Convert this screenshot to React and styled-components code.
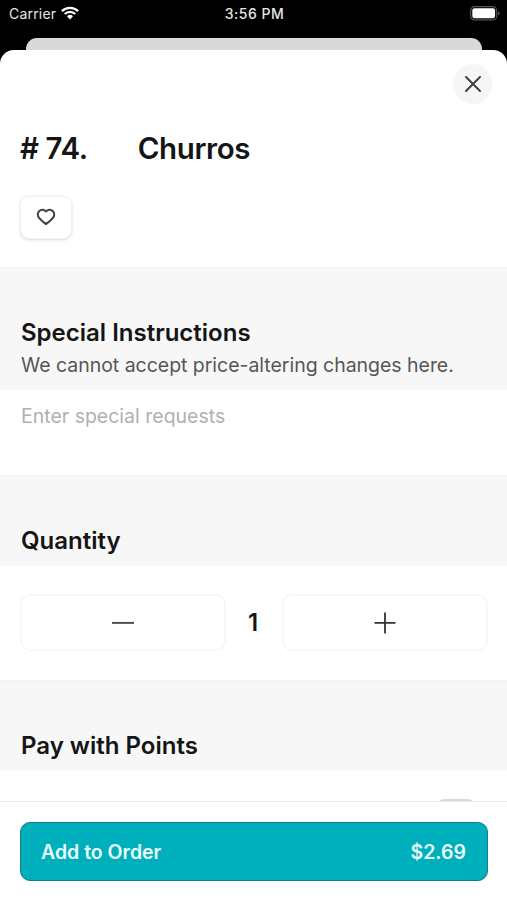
import React, { useState } from 'react';
import styled, { createGlobalStyle } from 'styled-components';

const GlobalStyle = createGlobalStyle`
  * {
    box-sizing: border-box;
  }

  body {
    margin: 0;
    background-color: #000;
    font-family: Inter, 'Liberation Sans', sans-serif;
    color: #151515;
  }

  button {
    font-family: inherit;
    color: inherit;
    padding: 0;
  }
`;

const Screen = styled.div`
  display: flex;
  flex-direction: column;
  height: 900px;
  overflow: hidden;
`;

const StatusBar = styled.header`
  display: grid;
  grid-template-columns: 1fr auto 1fr;
  align-items: center;
  height: 26px;
  margin-bottom: 12px;
  padding: 0 7px 0 9px;
  color: #e6e6e6;
  font-size: 14px;
`;

const Carrier = styled.div`
  display: flex;
  align-items: center;
  gap: 5px;
  letter-spacing: 0.2px;
`;

const Clock = styled.div`
  font-weight: 500;
  letter-spacing: 0.5px;
`;

const BatterySlot = styled.div`
  display: flex;
  justify-content: flex-end;
`;

const PreviousSheet = styled.div`
  flex: none;
  height: 12px;
  margin: 0 25px 0 26px;
  border-radius: 11px 11px 0 0;
  background-color: #d9d9d9;
`;

const Sheet = styled.main`
  display: flex;
  flex: 1;
  flex-direction: column;
  min-height: 0;
  border-radius: 14px 14px 0 0;
  background-color: #fff;
  overflow: hidden;
`;

const Content = styled.div`
  flex: 1;
  min-height: 0;
  overflow: hidden;
`;

const ItemHeader = styled.div`
  height: 217px;
  padding: 14px 15px 0 20px;
`;

const CloseButton = styled.button`
  display: flex;
  align-items: center;
  justify-content: center;
  width: 39px;
  height: 40px;
  margin-left: auto;
  border: 0;
  border-radius: 50%;
  background-color: #f6f6f6;
`;

const ItemTitle = styled.h1`
  display: flex;
  gap: 50px;
  margin: 24px 0 28px;
  font-size: 29.5px;
  font-weight: 600;
  letter-spacing: -0.4px;
  line-height: 40px;
`;

const FavoriteButton = styled.button`
  display: flex;
  align-items: center;
  justify-content: center;
  width: 52px;
  height: 43px;
  padding-bottom: 1px;
  border: 1px solid #f2f2f2;
  border-radius: 9px;
  background-color: #fff;
  box-shadow: 0 1px 3px rgba(0, 0, 0, 0.15);
`;

const SectionHeader = styled.div`
  height: ${(props) => props.$height}px;
  padding: 49px 21px 0;
  border-top: 1px solid #f3f3f3;
  background-color: #f7f7f7;
`;

const SectionTitle = styled.h2`
  margin: 0;
  font-size: 24px;
  font-weight: 600;
  line-height: 32px;
`;

const SectionNote = styled.p`
  margin: 2px 0 0;
  color: #565656;
  font-size: 19.5px;
  letter-spacing: -0.03px;
  line-height: 28px;
  white-space: nowrap;
`;

const RequestInput = styled.textarea`
  display: block;
  width: 100%;
  height: 85px;
  padding: 12px 21px;
  border: 0;
  resize: none;
  background-color: #fff;
  font-family: inherit;
  font-size: 19.5px;
  line-height: 28px;

  &::placeholder {
    color: #b0b0b0;
    opacity: 1;
  }
`;

const Stepper = styled.div`
  display: grid;
  grid-template-columns: 206px 1fr 206px;
  align-items: center;
  height: 114px;
  padding: 0 19px 1px 20px;
`;

const StepButton = styled.button`
  display: flex;
  align-items: center;
  justify-content: center;
  height: 57px;
  border: 2px solid #f7f7f7;
  border-radius: 10px;
  background-color: #fff;
`;

const Amount = styled.span`
  padding-right: 2px;
  text-align: center;
  font-size: 24px;
  font-weight: 600;
`;

const PointsRow = styled.div`
  display: flex;
  justify-content: flex-end;
  padding: 28px 30px 0;
`;

const Toggle = styled.button`
  width: 42px;
  height: 28px;
  border: 2px solid #d9d9d9;
  border-radius: 10px;
  background-color: #e4e4e4;
`;

const Footer = styled.footer`
  height: 99px;
  padding: 20px 19px 0 20px;
  border-top: 1px solid #ebebeb;
  background-color: #fff;
`;

const OrderButton = styled.button`
  display: flex;
  align-items: center;
  justify-content: space-between;
  width: 100%;
  height: 59px;
  padding: 0 21px 0 20px;
  border: 1px solid #167b82;
  border-radius: 10px;
  background-color: #00afbc;
  color: #e9fdff;
  font-size: 19.5px;
  font-weight: 600;
`;

const WifiIcon = () => (
  <svg width="18" height="14" viewBox="0 0 18 14" fill="none" stroke="#fff" strokeWidth="2.3">
    <path d="M0.9 5.1A11.6 11.6 0 0 1 17.1 5.1" />
    <path d="M3.7 8A7.5 7.5 0 0 1 14.3 8" />
    <path d="M6 10.2A4.4 4.4 0 0 1 12 10.2L9 13.4Z" fill="#fff" stroke="none" />
  </svg>
);

const BatteryIcon = () => (
  <svg width="30" height="15" viewBox="0 0 30 15">
    <rect x="0.7" y="0.7" width="26" height="13.2" rx="3.8" fill="none" stroke="#555" strokeWidth="1.2" />
    <rect x="2.3" y="2.3" width="22.8" height="10" rx="2.2" fill="#fff" />
    <path d="M28 5.2Q29.6 5.8 29.6 7.3T28 9.4Z" fill="#555" />
  </svg>
);

const CloseIcon = () => (
  <svg width="18" height="18" viewBox="0 0 18 18" stroke="#414141" strokeWidth="2" strokeLinecap="round">
    <path d="M2 2L16 16M16 2L2 16" />
  </svg>
);

const HeartIcon = () => (
  <svg width="20" height="18" viewBox="0 0 20 18" fill="none" stroke="#424242" strokeWidth="2.1" strokeLinejoin="round">
    <path d="M10 3.5C8.5 1.4 5.3 1.1 3.3 3C1.3 5 1.4 8 3.3 10.1C5.3 12.4 7.7 14.5 10 16C12.3 14.5 14.7 12.4 16.7 10.1C18.6 8 18.7 5 16.7 3C14.7 1.1 11.5 1.4 10 3.5Z" />
  </svg>
);

const MinusIcon = () => (
  <svg width="22" height="22" viewBox="0 0 22 22" stroke="#4a4a4a" strokeWidth="1.9">
    <path d="M0 10.9H22" />
  </svg>
);

const PlusIcon = () => (
  <svg width="22" height="22" viewBox="0 0 22 22" stroke="#333" strokeWidth="1.8">
    <path d="M0.5 10.9H21.5M11 0.4V21.4" />
  </svg>
);

const App = () => {
  const [quantity, setQuantity] = useState(1);
  const price = 2.69;

  return (
    <>
      <GlobalStyle />
      <Screen>
        <StatusBar>
          <Carrier>
            Carrier
            <WifiIcon />
          </Carrier>
          <Clock>3:56 PM</Clock>
          <BatterySlot>
            <BatteryIcon />
          </BatterySlot>
        </StatusBar>
        <PreviousSheet />
        <Sheet>
          <Content>
            <ItemHeader>
              <CloseButton>
                <CloseIcon />
              </CloseButton>
              <ItemTitle>
                <span># 74.</span>
                <span>Churros</span>
              </ItemTitle>
              <FavoriteButton>
                <HeartIcon />
              </FavoriteButton>
            </ItemHeader>

            <SectionHeader $height={123}>
              <SectionTitle>Special Instructions</SectionTitle>
              <SectionNote>We cannot accept price-altering changes here.</SectionNote>
            </SectionHeader>
            <RequestInput placeholder="Enter special requests" />

            <SectionHeader $height={91}>
              <SectionTitle>Quantity</SectionTitle>
            </SectionHeader>
            <Stepper>
              <StepButton onClick={() => setQuantity(Math.max(1, quantity - 1))}>
                <MinusIcon />
              </StepButton>
              <Amount>{quantity}</Amount>
              <StepButton onClick={() => setQuantity(quantity + 1)}>
                <PlusIcon />
              </StepButton>
            </Stepper>

            <SectionHeader $height={91}>
              <SectionTitle>Pay with Points</SectionTitle>
            </SectionHeader>
            <PointsRow>
              <Toggle />
            </PointsRow>
          </Content>

          <Footer>
            <OrderButton>
              <span>Add to Order</span>
              <span>${(price * quantity).toFixed(2)}</span>
            </OrderButton>
          </Footer>
        </Sheet>
      </Screen>
    </>
  );
};

export default App;
